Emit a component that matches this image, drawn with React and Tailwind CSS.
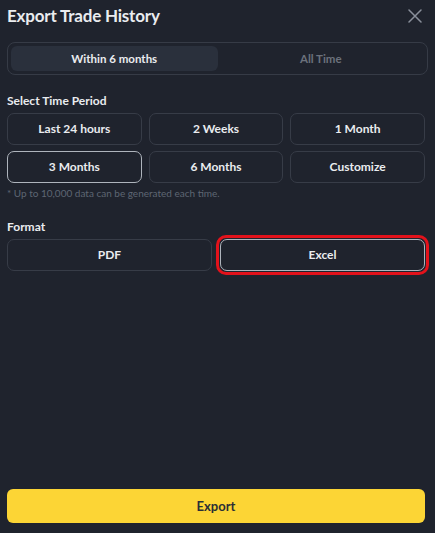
import React from "react";

const font = { fontFamily: "Lato, 'Noto Sans', sans-serif" };

function Btn({ children, selected }) {
  return (
    <div
      className={`h-[32px] flex items-center justify-center rounded-[7px] border text-[12px] font-bold text-[#eaecef] ${
        selected ? "border-[#aeb4bc]" : "border-[#373c47]"
      }`}
    >
      {children}
    </div>
  );
}

export default function App() {
  return (
    <div
      className="w-[435px] h-[533px] bg-[#1f232d] flex flex-col px-[7px] overflow-hidden"
      style={font}
    >
      <div className="flex items-center justify-between h-[24px] mt-[4px]">
        <div className="text-[17px] font-bold text-[#eaecef] tracking-[-0.2px]">
          Export Trade History
        </div>
        <svg width="14" height="14" viewBox="0 0 14 14" className="mr-[6px]">
          <path d="M1 1L13 13M13 1L1 13" stroke="#8a909b" strokeWidth="1.5" strokeLinecap="round" />
        </svg>
      </div>

      <div className="mt-[14px] h-[33px] rounded-[8px] border border-[#363b46] p-[3px] flex">
        <div className="flex-1 rounded-[6px] bg-[#2a303c] flex items-center justify-center text-[11.5px] font-bold text-[#eaecef]">
          Within 6 months
        </div>
        <div className="flex-1 flex items-center justify-center text-[11.5px] font-bold text-[#6b717c]">
          All Time
        </div>
      </div>

      <div className="mt-[19px] text-[12px] font-bold text-[#eaecef] leading-[14px]">
        Select Time Period
      </div>
      <div className="mt-[5px] grid grid-cols-3 gap-x-[7px] gap-y-[6px] w-[418px]">
        <Btn>Last 24 hours</Btn>
        <Btn>2 Weeks</Btn>
        <Btn>1 Month</Btn>
        <Btn selected>3 Months</Btn>
        <Btn>6 Months</Btn>
        <Btn>Customize</Btn>
      </div>
      <div className="mt-[4px] text-[10px] text-[#5e6673] leading-[12px]">
        * Up to 10,000 data can be generated each time.
      </div>

      <div className="mt-[21px] text-[12px] font-bold text-[#eaecef] leading-[14px]">
        Format
      </div>
      <div className="mt-[5px] grid grid-cols-2 gap-x-[8px] w-[418px]">
        <Btn>PDF</Btn>
        <div className="relative">
          <Btn selected>Excel</Btn>
          <div className="absolute -inset-[4px] rounded-[10px] border-[3px] border-[#e3121b] pointer-events-none" />
        </div>
      </div>

      <div className="flex-1" />
      <div className="mb-[10px] h-[34px] pt-[2px] rounded-[6px] bg-[#fcd535] flex items-center justify-center text-[13px] font-bold text-[#2b2f36] w-[418px]">
        Export
      </div>
    </div>
  );
}
